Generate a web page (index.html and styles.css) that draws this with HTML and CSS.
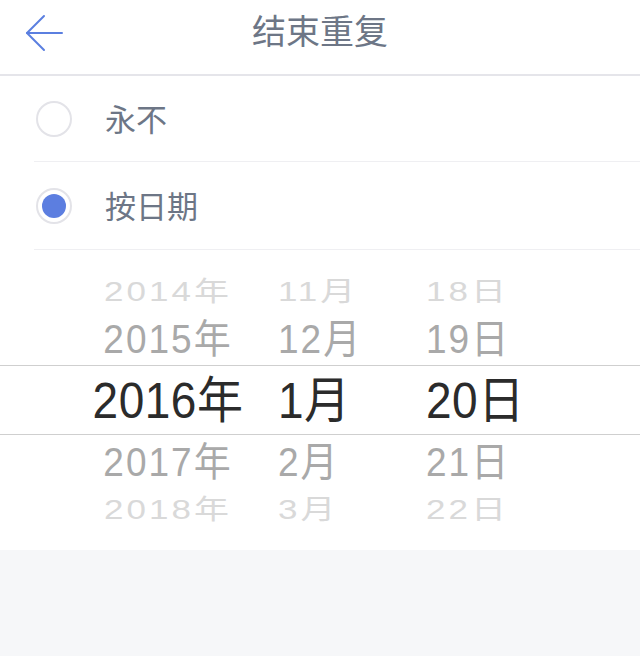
FILE: index.html
```html
<!DOCTYPE html>
<html lang="zh-CN">
<head>
<meta charset="utf-8">
<title>结束重复</title>
<link rel="stylesheet" href="styles.css">
</head>
<body>
<div class="screen">
  <header class="nav">
    <span class="back">
      <svg width="38" height="38" viewBox="0 0 38 38" fill="none" stroke="#5b7fe0" stroke-width="2" stroke-linecap="round" stroke-linejoin="round">
        <path d="M37 19H2"/>
        <path d="M19 2L2 19L19 36"/>
      </svg>
    </span>
    <h1 class="title">结束重复</h1>
  </header>
  <ul class="options">
    <li class="option first"><span class="radio"></span><span class="label">永不</span></li>
    <li class="option second"><span class="radio checked"></span><span class="label">按日期</span></li>
  </ul>
  <div class="picker">
    <div class="prow far top"><span class="c y">2014年</span><span class="c m">11月</span><span class="c d">18日</span></div>
    <div class="prow near"><span class="c y">2015年</span><span class="c m">12月</span><span class="c d">19日</span></div>
    <div class="prow sel"><span class="c y">2016年</span><span class="c m">1月</span><span class="c d">20日</span></div>
    <div class="prow near"><span class="c y">2017年</span><span class="c m">2月</span><span class="c d">21日</span></div>
    <div class="prow far bottom"><span class="c y">2018年</span><span class="c m">3月</span><span class="c d">22日</span></div>
  </div>
  <div class="rest"></div>
</div>
</body>
</html>
```
FILE: styles.css
```css
* { box-sizing: border-box; }
html, body { margin: 0; padding: 0; }
body {
  width: 640px;
  height: 656px;
  background: #f6f7f9;
  font-family: "Noto Sans CJK SC", "Noto Sans", sans-serif;
  overflow: hidden;
}
.screen { display: flex; flex-direction: column; height: 656px; }
.nav {
  height: 76px;
  background: #fff;
  border-bottom: 2px solid #e5e5ea;
  display: flex;
  align-items: center;
  justify-content: center;
  position: relative;
}
.back {
  position: absolute;
  left: 25px;
  top: 14px;
  width: 38px;
  height: 38px;
  display: flex;
}
.title {
  margin: 0;
  margin-top: -15px;
  font-size: 34px;
  font-weight: 400;
  color: #6d7686;
  line-height: 1;
}
.options { list-style: none; margin: 0; padding: 0 0 0 34px; background: #fff; }
.option {
  display: flex;
  align-items: center;
  border-bottom: 1px solid #efeff2;
}
.option.first { height: 86px; }
.option.second { height: 88px; }
.radio {
  width: 36px;
  height: 36px;
  margin-left: 2px;
  border: 2px solid #e3e3e8;
  border-radius: 50%;
  display: flex;
  align-items: center;
  justify-content: center;
}
.radio.checked::after {
  content: "";
  width: 24px;
  height: 24px;
  border-radius: 50%;
  background: #5c7ee0;
}
.label {
  margin-left: 33px;
  font-size: 31px;
  color: #6d7686;
  line-height: 1;
  margin-top: -3px;
}
.picker {
  height: 300px;
  background: #fff;
  padding-top: 20px;
  font-family: "Liberation Sans", "Noto Sans CJK SC", sans-serif;
  overflow: hidden;
}
.prow {
  display: grid;
  grid-template-columns: 160px 118px 1fr;
  column-gap: 30px;
  padding-left: 88px;
  align-items: center;
  white-space: nowrap;
}
.c.y { text-align: center; }
.prow.far { height: 42px; font-size: 35px; color: #d9d9d9; letter-spacing: 3px; }
.prow.far.bottom { height: 40px; }
.prow.far .c { transform: translateY(-7px) scaleY(0.78); }
.prow.near { height: 53px; font-size: 37px; color: #a9a9a9; letter-spacing: 2px; }
.prow.near .c { transform: translateY(-3px) scaleY(1.08); }
.prow.sel {
  height: 70px;
  font-size: 46px;
  color: #2b2b2b;
  border-top: 1px solid #cfcfcf;
  border-bottom: 1px solid #cfcfcf;
  letter-spacing: 0.5px;
}
.prow.sel .c { transform: translateY(-4px) scaleY(1.08); }
.rest { flex: 1; background: #f6f7f9; }
```
